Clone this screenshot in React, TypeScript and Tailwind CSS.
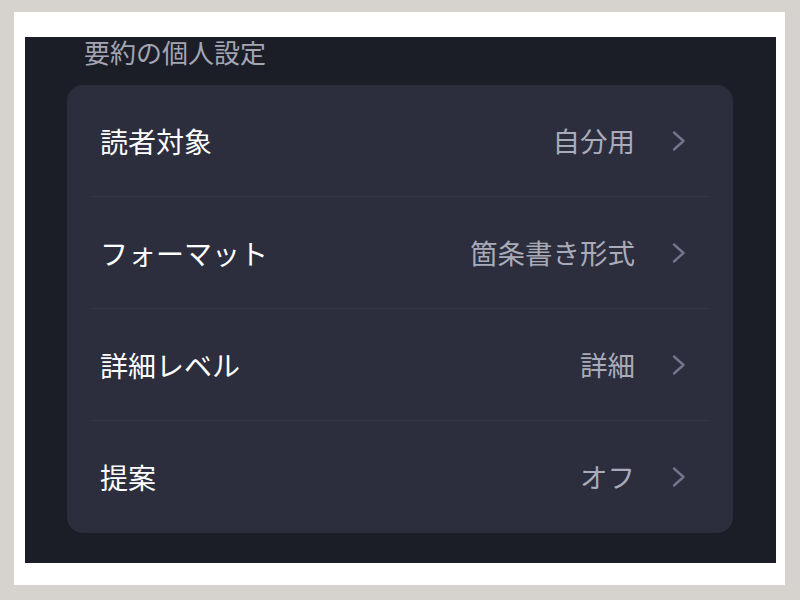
const rows = [
  { label: '読者対象', value: '自分用' },
  { label: 'フォーマット', value: '箇条書き形式' },
  { label: '詳細レベル', value: '詳細' },
  { label: '提案', value: 'オフ' },
]

function Chevron() {
  return (
    <svg viewBox="0 0 14 22" className="ml-[37px] h-[22px] w-[14px] text-[#72758b]" fill="none">
      <path d="M2 2.5 L11.5 11 L2 19.5" stroke="currentColor" strokeWidth="2.4" strokeLinecap="round" strokeLinejoin="round" />
    </svg>
  )
}

function SettingRow({ label, value, last }: { label: string; value: string; last: boolean }) {
  return (
    <div className="relative flex h-[112px] items-center pl-[33px] pr-[47px]">
      <span className="flex-1 text-[28px] leading-none text-white">{label}</span>
      <span className="text-[27.5px] leading-none text-[#a9abb9]">{value}</span>
      <Chevron />
      {!last && <div className="absolute bottom-0 left-6 right-6 h-px bg-[#363846]" />}
    </div>
  )
}

export default function App() {
  return (
    <div
      className="flex h-[600px] w-[800px] bg-[#d6d3ce] pb-[15px] pl-[14px] pr-[15px] pt-[12px]"
      style={{ fontFamily: '"Noto Sans CJK JP", "Noto Sans", sans-serif' }}
    >
      <div className="flex flex-1 bg-white pb-[22px] pl-[11px] pr-[9px] pt-[25px]">
        <div className="flex flex-1 flex-col bg-[#1c1e27] pl-[42px] pr-[43px]">
          <div className="h-[30px] pl-[17px] text-[26px] leading-[30px] text-[#a3a5b3]">
            要約の個人設定
          </div>
          <div className="mt-[18px] rounded-[16px] bg-[#2c2e3d]">
            {rows.map((r, i) => (
              <SettingRow key={r.label} label={r.label} value={r.value} last={i === rows.length - 1} />
            ))}
          </div>
        </div>
      </div>
    </div>
  )
}
